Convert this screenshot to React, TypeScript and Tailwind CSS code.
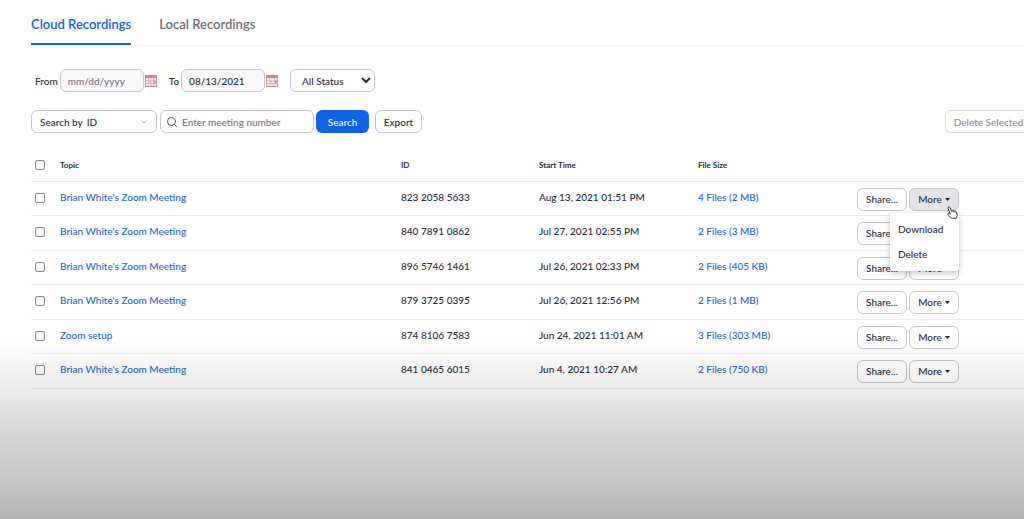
import { useState } from "react";
import { ChevronDown, Search } from "lucide-react";

type Recording = {
  id: string;
  topic: string;
  start: string;
  files: string;
};

const recordings: Recording[] = [
  { id: "823 2058 5633", topic: "Brian White's Zoom Meeting", start: "Aug 13, 2021 01:51 PM", files: "4 Files (2 MB)" },
  { id: "840 7891 0862", topic: "Brian White's Zoom Meeting", start: "Jul 27, 2021 02:55 PM", files: "2 Files (3 MB)" },
  { id: "896 5746 1461", topic: "Brian White's Zoom Meeting", start: "Jul 26, 2021 02:33 PM", files: "2 Files (405 KB)" },
  { id: "879 3725 0395", topic: "Brian White's Zoom Meeting", start: "Jul 26, 2021 12:56 PM", files: "2 Files (1 MB)" },
  { id: "874 8106 7583", topic: "Zoom setup", start: "Jun 24, 2021 11:01 AM", files: "3 Files (303 MB)" },
  { id: "841 0465 6015", topic: "Brian White's Zoom Meeting", start: "Jun 4, 2021 10:27 AM", files: "2 Files (750 KB)" },
];

const checkboxClass =
  "block size-[10px] appearance-none rounded-[2px] border border-[#858585] bg-white checked:bg-[#0e71eb]";

function CalendarIcon() {
  return (
    <svg width="12" height="12" viewBox="0 0 12 12" aria-hidden="true">
      <rect x="0.5" y="0.5" width="11" height="11" fill="#f8e6e6" stroke="#d99a98" />
      <rect x="0" y="0" width="12" height="3" fill="#dc8580" />
      <path d="M1 5.5h10M1 8.5h10M3.5 3v8M6 3v8M8.5 3v8" stroke="#dcb0b4" strokeWidth="0.7" />
      <path d="M8.5 5.5h2.5v3H8.5z" fill="#e09a96" />
      <path d="M3.5 5.5H6v3H3.5z" fill="#cfc8e2" />
      <path d="M0 11.5h12" stroke="#c48a8a" />
    </svg>
  );
}

function HandCursor() {
  return (
    <svg
      width="12"
      height="13"
      viewBox="0 0 12 13"
      className="pointer-events-none absolute top-[18px] right-0 z-20"
      aria-hidden="true"
    >
      <path
        d="M1.2 1.3c.7-.7 1.6-.3 1.9.5l1.2 2.9c.5-.6 1.3-.5 1.6.1.5-.4 1.2-.3 1.5.3.6-.3 1.400 0 1.700.7l.9 2.200c.4 1.300.1 2.300-.6 3.100l-.3 1.200H4.600L1.400 9.400C.8 8.700.6 8 1 7.600c.4-.4 1-.3 1.500.1l.8.6L1.100 2.600c-.2-.5-.2-1 .1-1.300z"
        fill="#fff"
        stroke="#333"
        strokeWidth="1"
        strokeLinejoin="round"
      />
      <path d="M4.3 4.7l.7 1.8M5.9 4.9l.6 1.6M7.4 5.2l.5 1.4" stroke="#333" strokeWidth="0.7" />
    </svg>
  );
}

function DateField({ label, value, name }: { label: string; value?: string; name: string }) {
  return (
    <div className="flex items-center">
      <label htmlFor={name} className="mr-0.5">
        {label}
      </label>
      <input
        id={name}
        type="text"
        placeholder="mm/dd/yyyy"
        defaultValue={value}
        className="h-[23px] w-[84px] rounded-md border border-[#c4c4cc] bg-[#f8f8fa] px-[7px] placeholder:text-[#74747f]"
      />
      <button type="button" aria-label={`Pick ${label} date`} className="ml-px">
        <CalendarIcon />
      </button>
    </div>
  );
}

function RowActions({ open, onToggle }: { open: boolean; onToggle: () => void }) {
  return (
    <div className="relative flex w-[102px] gap-0.5">
      <button type="button" className="h-[23px] w-[50px] rounded-md border border-[#c4c4cc]">
        Share...
      </button>
      <button
        type="button"
        aria-expanded={open}
        onClick={onToggle}
        className={`flex h-[23px] w-[50px] items-center justify-center gap-[3px] rounded-md border border-[#c4c4cc] ${
          open ? "bg-[#e4e4e6]" : ""
        }`}
      >
        More
        <svg width="5" height="3" viewBox="0 0 5 3" aria-hidden="true">
          <path d="M0 0h5L2.5 3z" fill="#232333" />
        </svg>
      </button>
      {open && (
        <>
          <div className="absolute top-[25px] right-0 z-10 flex h-[58px] w-[69px] flex-col rounded-sm bg-white pt-1 shadow-[0_2px_6px_rgba(0,0,0,0.25)]">
            <button type="button" className="h-[25px] px-2 text-left">
              Download
            </button>
            <button type="button" className="h-[25px] px-2 text-left">
              Delete
            </button>
          </div>
          <HandCursor />
        </>
      )}
    </div>
  );
}

export default function App() {
  const [openMenu, setOpenMenu] = useState<string | null>("823 2058 5633");

  return (
    <div className="relative min-h-screen overflow-hidden bg-white pb-10 pl-[31px] font-['Lato',sans-serif] text-[10px] leading-4 font-medium text-[#2c2c38]">
      <nav className="flex gap-7 border-b border-[#f1f1f4] pt-3 text-[13px] font-semibold">
        <a href="#cloud" className="-mb-px h-[33px] border-b-2 border-[#0e63dc] pt-1 text-[#0e63dc]">
          Cloud Recordings
        </a>
        <a href="#local" className="h-[33px] pt-1 text-[#6e6e7a]">
          Local Recordings
        </a>
      </nav>

      {/* Filters */}
      <div className="mt-[23px] flex items-center gap-3 pl-1">
        <DateField label="From" name="from" />
        <DateField label="To" name="to" value="08/13/2021" />
        <select
          aria-label="Status"
          className="h-[23px] w-[85px] rounded-md border border-[#c4c4cc] bg-white pl-[7px]"
        >
          <option>All Status</option>
          <option>Recorded</option>
          <option>Processing</option>
        </select>
      </div>

      <div className="mt-[18px] flex items-center">
        <div className="flex h-[23px] w-[126px] items-center rounded-md border border-[#c4c4cc] px-2">
          <label htmlFor="search-by">Search by</label>
          <select id="search-by" className="ml-1 flex-1 appearance-none">
            <option>ID</option>
            <option>Topic</option>
          </select>
          <ChevronDown className="pointer-events-none -ml-2 size-2 text-[#6e6e7a]" />
        </div>
        <div className="ml-[3px] flex h-[23px] w-[154px] items-center gap-1 rounded-md border border-[#c4c4cc] px-[5px]">
          <Search className="size-3 shrink-0 text-[#55555f]" />
          <input
            type="text"
            aria-label="Meeting number"
            placeholder="Enter meeting number"
            className="w-full min-w-0 placeholder:text-[#74747f]"
          />
        </div>
        <button type="button" className="ml-0.5 h-[23px] w-[53px] rounded-md bg-[#0e63e8] text-white">
          Search
        </button>
        <button type="button" className="ml-1.5 h-[23px] w-[47px] rounded-md border border-[#c4c4cc]">
          Export
        </button>
        <button
          type="button"
          disabled
          className="-mr-2 ml-auto h-[23px] w-[87px] rounded-md border border-[#dcdce0] whitespace-nowrap text-[#8c8c96]"
        >
          Delete Selected
        </button>
      </div>

      <table className="mt-[17px] w-full table-fixed text-left">
        <thead>
          <tr className="h-[31px] border-b border-[#e6e6e9] text-[8px]">
            <th className="w-[29px] pl-1">
              <input type="checkbox" aria-label="Select all" className={checkboxClass} />
            </th>
            <th className="font-bold">Topic</th>
            <th className="w-[138px] font-bold">ID</th>
            <th className="w-[159px] font-bold">Start Time</th>
            <th className="w-[159px] font-bold">File Size</th>
            <th className="w-[167px]" aria-label="Actions" />
          </tr>
        </thead>
        <tbody>
          {recordings.map((rec) => (
            <tr key={rec.id} className="border-b border-[#ededf0] align-top odd:h-[34px] even:h-[35px]">
              <td className="pt-[11px] pl-1">
                <input type="checkbox" aria-label={`Select ${rec.id}`} className={checkboxClass} />
              </td>
              <td className="pt-[7px]">
                <a href="#detail" className="text-[#1c68c8]">
                  {rec.topic}
                </a>
              </td>
              <td className="pt-[7px]">{rec.id}</td>
              <td className="pt-[7px]">{rec.start}</td>
              <td className="pt-[7px]">
                <a href="#files" className="text-[#1c68c8]">
                  {rec.files}
                </a>
              </td>
              <td className="pt-1.5">
                <RowActions
                  open={openMenu === rec.id}
                  onToggle={() => setOpenMenu(openMenu === rec.id ? null : rec.id)}
                />
              </td>
            </tr>
          ))}
        </tbody>
      </table>

      {/* Shade along the bottom edge */}
      <div className="pointer-events-none absolute inset-x-0 bottom-0 h-[179px] bg-linear-to-b from-black/0 via-black/15 to-black/29" />
    </div>
  );
}
